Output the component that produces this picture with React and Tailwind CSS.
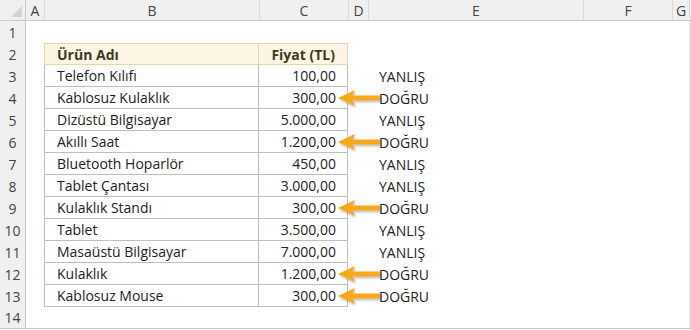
import React from "react";

const items = [
  { name: "Telefon Kılıfı", price: "100,00", ok: false },
  { name: "Kablosuz Kulaklık", price: "300,00", ok: true },
  { name: "Dizüstü Bilgisayar", price: "5.000,00", ok: false },
  { name: "Akıllı Saat", price: "1.200,00", ok: true },
  { name: "Bluetooth Hoparlör", price: "450,00", ok: false },
  { name: "Tablet Çantası", price: "3.000,00", ok: false },
  { name: "Kulaklık Standı", price: "300,00", ok: true },
  { name: "Tablet", price: "3.500,00", ok: false },
  { name: "Masaüstü Bilgisayar", price: "7.000,00", ok: false },
  { name: "Kulaklık", price: "1.200,00", ok: true },
  { name: "Kablosuz Mouse", price: "300,00", ok: true },
];

const cols = [
  { label: "A", w: "w-[18px]" },
  { label: "B", w: "w-[215px]" },
  { label: "C", w: "w-[89px]" },
  { label: "D", w: "w-[20px]" },
  { label: "E", w: "w-[215px]" },
  { label: "F", w: "w-[89px]" },
  { label: "G", w: "w-[17px]" },
];

const Arrow = () => (
  <svg
    className="absolute left-[336px] top-0"
    width="48"
    height="24"
    viewBox="0 0 48 24"
  >
    <defs>
      <filter id="sh" x="-20%" y="-40%" width="140%" height="180%">
        <feDropShadow dx="1" dy="1.5" stdDeviation="1" floodColor="#000" floodOpacity="0.3" />
      </filter>
    </defs>
    <g filter="url(#sh)">
      <path d="M2 11 L19 3 L16.5 8.5 L44 8.5 L44 13.5 L16.5 13.5 L19 19 Z" fill="#f5a81f" />
    </g>
  </svg>
);

const RowHead = ({ n }) => (
  <div className="w-[26px] shrink-0 bg-[#f0f0f0] border-r border-[#c8c8c8] flex items-center justify-center text-[14px] text-[#444]">
    {n}
  </div>
);

const App = () => {
  return (
    <div className="w-[691px] h-[330px] bg-white overflow-hidden font-['Open_Sans',sans-serif] text-[14px] text-[#222]">
      {/* column headers */}
      <div className="flex h-[21px] bg-[#f0f0f0] border-b border-[#c8c8c8]">
        <div className="w-[26px] shrink-0 relative border-r border-[#c8c8c8]">
          <div className="absolute right-[3px] bottom-[3px] w-0 h-0 border-l-[11px] border-l-transparent border-b-[11px] border-b-[#d4d4d4]" />
        </div>
        {cols.map((c, i) => (
          <div
            key={c.label}
            className={`${c.w} shrink-0 flex items-center justify-center text-[14px] text-[#444] ${i > 0 ? "border-l border-[#dadada]" : ""}`}
          >
            {c.label}
          </div>
        ))}
        <div className="flex-1 border-l border-[#dadada]" />
      </div>

      {/* row 1 */}
      <div className="flex h-[22px]">
        <RowHead n={1} />
        <div className="flex-1" />
        <div className="w-[2px] bg-[#e2e2e2]" />
      </div>

      {/* row 2: table header */}
      <div className="flex h-[22px]">
        <RowHead n={2} />
        <div className="w-[18px] shrink-0" />
        <div className="w-[215px] shrink-0 bg-[#fdf5e3] border border-[#e4d7ae] flex items-center pl-[12px] font-bold text-[#3e3a22]">
          Ürün Adı
        </div>
        <div className="w-[89px] shrink-0 bg-[#fdf5e3] border-y border-r border-[#e4d7ae] flex items-center justify-end pr-[12px] font-bold text-[#3e3a22]">
          Fiyat (TL)
        </div>
        <div className="flex-1" />
        <div className="w-[2px] bg-[#e2e2e2]" />
      </div>

      {items.map((it, i) => (
        <div key={i} className="flex h-[22px] relative">
          <RowHead n={i + 3} />
          <div className="w-[18px] shrink-0" />
          <div className="w-[215px] shrink-0 border-x border-b border-[#bfbfbf] flex items-center pl-[12px]">
            {it.name}
          </div>
          <div className="w-[89px] shrink-0 border-r border-b border-[#bfbfbf] flex items-center justify-end pr-[11px]">
            {it.price}
          </div>
          <div className="w-[20px] shrink-0" />
          <div className="w-[215px] shrink-0 flex items-center pl-[11px]">
            {it.ok ? "DOĞRU" : "YANLIŞ"}
          </div>
          <div className="flex-1" />
          <div className="w-[2px] bg-[#e2e2e2]" />
          {it.ok && <Arrow />}
        </div>
      ))}

      {/* row 14 */}
      <div className="flex h-[22px] border-b border-[#c8c8c8]">
        <RowHead n={14} />
        <div className="flex-1" />
        <div className="w-[2px] bg-[#e2e2e2]" />
      </div>
    </div>
  );
};

export default App;
